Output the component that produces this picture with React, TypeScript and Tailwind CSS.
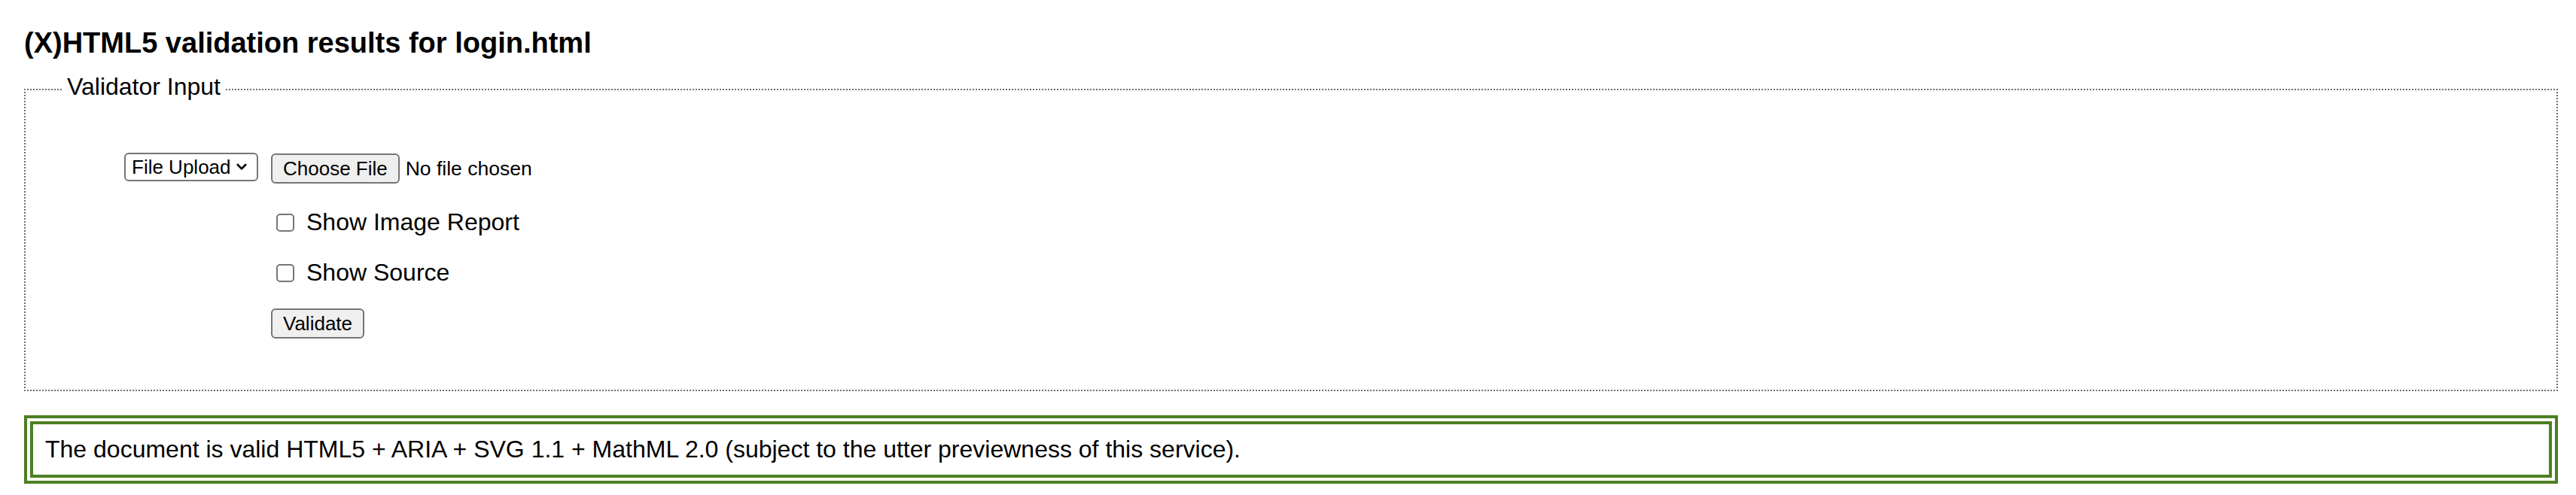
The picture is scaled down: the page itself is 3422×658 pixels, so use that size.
import React from "react";

const Chevron = () => (
  <svg
    width="14"
    height="10"
    viewBox="0 0 14 10"
    className="pointer-events-none absolute right-[15px] top-[14px]"
  >
    <path
      d="M1.8 2 L7 7.4 L12.2 2"
      fill="none"
      stroke="#000"
      strokeWidth="2.6"
      strokeLinecap="round"
      strokeLinejoin="round"
    />
  </svg>
);

const CheckRow: React.FC<{ label: string; className?: string }> = ({ label, className }) => (
  <label className={`ml-[7px] flex items-center ${className ?? ""}`}>
    <input
      type="checkbox"
      className="h-6 w-6 appearance-none rounded-[5px] border-2 border-[#767676] bg-white"
    />
    <span className="ml-4 text-[32px] leading-[37px]">{label}</span>
  </label>
);

export default function App() {
  return (
    <div className="min-h-screen bg-white pl-8 pr-[24px] pt-[35px] font-['Liberation_Sans',Arial,sans-serif] text-black">
      <h2 className="text-[38px] font-bold leading-[44px]">
        (X)HTML5 validation results for login.html
      </h2>

      <fieldset className="mt-[18px] border-2 border-dotted border-[#6f6f6f] pl-[50px] pt-[62px] pb-[68px]">
        <legend className="px-[5px] pb-[7px] text-[32px] leading-[37px]">Validator Input</legend>

        <div className="flex">
          <div className="flex w-[276px] justify-end pr-[17px]">
            <div className="relative h-[38px]">
              <select className="h-[38px] w-[178px] appearance-none rounded-[6px] border-2 border-[#767676] bg-white pl-[8px] pr-[30px] text-[26px] leading-[30px]">
                <option>File Upload</option>
                <option>Address</option>
                <option>Text Field</option>
              </select>
              <Chevron />
            </div>
          </div>

          <div className="flex flex-col items-start">
            <div className="mt-px flex items-center">
              <button
                type="button"
                className="h-10 rounded-[6px] border-2 border-[#767676] bg-[#efefef] px-[14px] text-[26px] leading-[30px]"
              >
                Choose File
              </button>
              <span className="ml-2 text-[26.5px] leading-[30px]">No file chosen</span>
            </div>

            <CheckRow label="Show Image Report" className="mt-[33px]" />
            <CheckRow label="Show Source" className="mt-[30px]" />

            <button
              type="button"
              className="mt-[29px] h-10 rounded-[6px] border-2 border-[#767676] bg-[#efefef] px-[14px] text-[26px] leading-[30px]"
            >
              Validate
            </button>
          </div>
        </div>
      </fieldset>

      <div className="mt-[32px] border-[12px] border-double border-[#4c7f23] px-4 py-[15px] text-[32px] leading-[37px]">
        The document is valid HTML5 + ARIA + SVG 1.1 + MathML 2.0 (subject to the utter previewness of this
        service).
      </div>
    </div>
  );
}
